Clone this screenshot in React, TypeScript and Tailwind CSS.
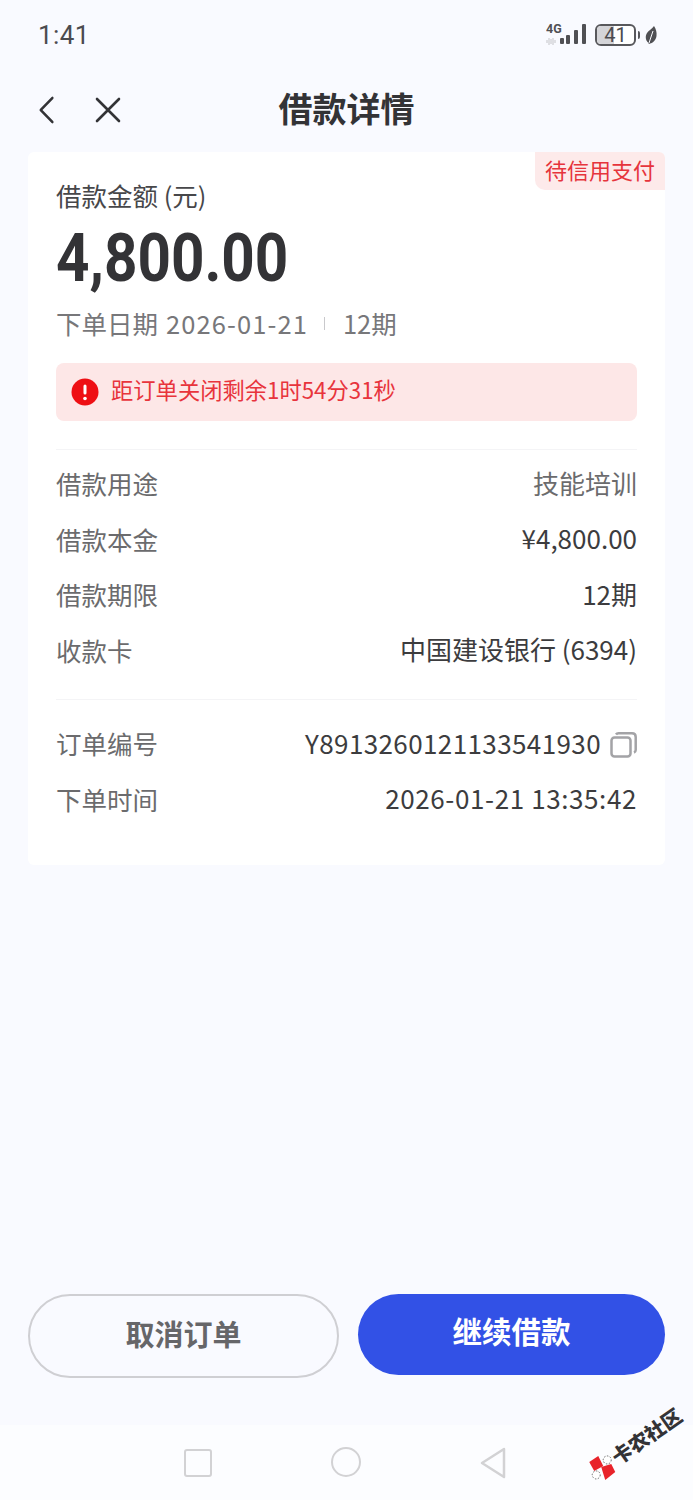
import React from "react";

const CJK = "font-['Noto_Sans_CJK_SC','Noto_Sans',sans-serif]";

function Row({ label, children }: { label: string; children: React.ReactNode }) {
  return (
    <div className="flex h-[55.500px] items-center justify-between pb-[6px]">
      <span className="text-[25.500px] leading-none text-[#6b6b6d]">{label}</span>
      <span className="flex items-center text-[26px] leading-none text-[#3c3c3e]">{children}</span>
    </div>
  );
}

export default function App() {
  return (
    <div className={`${CJK} relative flex h-[1500px] w-[693px] flex-col overflow-hidden bg-[#f9faff]`}>
      {/* status bar */}
      <div className="flex h-[70px] shrink-0 items-center justify-between pl-[38px] pr-[36px]">
        <span className="font-['Roboto',sans-serif] text-[26px] leading-none tracking-[0.4px] text-[#4b4b4f]">1:41</span>
        <div className="flex items-center">
          <svg width="41" height="30" viewBox="0 -3 41 30">
            <text x="0" y="10" fontSize="12.500" fontWeight="700" fill="#505054" fontFamily="Roboto">4G</text>
            <path d="M1 17v3M3 15v7M5 16v5M7 15v7M9 17v3" stroke="#c4c4c8" strokeWidth="1" />
            <rect x="14" y="15" width="4" height="6" rx="1" fill="#505054" />
            <rect x="20" y="12" width="4" height="9" rx="1" fill="#505054" />
            <rect x="28" y="7" width="4" height="14" rx="1" fill="#505054" />
            <rect x="36" y="1" width="4" height="20" rx="1" fill="#505054" />
          </svg>
          <div className="relative ml-[8px] flex h-[22px] w-[41px] items-center justify-center overflow-hidden rounded-[6px] border-2 border-[#58585c] bg-white">
            <div className="absolute inset-y-0 left-0 w-[17px] bg-[#d4d4d8]" />
            <span className="relative font-['Roboto',sans-serif] text-[20px] leading-none text-[#4b4b4f]">41</span>
          </div>
          <div className="ml-[2px] h-[8px] w-[2px] rounded-r bg-[#58585c]" />
          <svg className="ml-[5px]" width="12" height="18" viewBox="0 0 12 18">
            <path d="M9 0C11 3 12 6 11.500 10C11 14 8 17 5 17.500L4 18L3 16.500C0.500 14 0 10 2 7C3.500 4.500 7 3 9 0Z" fill="#505054" />
            <path d="M8 5L4 17" stroke="#f9faff" strokeWidth="1" />
          </svg>
        </div>
      </div>

      {/* header */}
      <div className="relative flex h-[80px] shrink-0 items-center justify-center pb-[4px]">
        <div className="absolute left-[38px] top-[25px] flex items-center gap-[37px]">
          <svg width="20" height="30" viewBox="0 0 20 30" fill="none">
            <path d="M16 3L3 15L16 27" stroke="#333336" strokeWidth="2.600" strokeLinecap="round" strokeLinejoin="round" transform="scale(0.9 1)" />
          </svg>
          <svg width="26" height="26" viewBox="0 0 26 26" fill="none">
            <path d="M2 2L24 24M24 2L2 24" stroke="#333336" strokeWidth="2.600" strokeLinecap="round" />
          </svg>
        </div>
        <span className="text-[34px] font-bold leading-none text-[#333336]">借款详情</span>
      </div>

      {/* card */}
      <div className="relative mx-[28px] mt-[2px] h-[713px] shrink-0 rounded-[6px] bg-white px-[28px] pt-[27px]">
        <div className="absolute right-0 top-0 flex h-[38px] w-[130px] items-center justify-center rounded-bl-[10px] rounded-tr-[6px] bg-[#fdeaea] pb-[4px] text-[22px] leading-none text-[#e6343c]">
          待信用支付
        </div>
        <div className="text-[25.500px] leading-[32px] text-[#47474a]">借款金额 (元)</div>
        <div className="mt-[14px] origin-left scale-x-[0.885] font-['Roboto',sans-serif] text-[66px] font-bold leading-[68px] text-[#333336]">4,800.00</div>
        <div className="mt-[14px] flex h-[32px] items-center text-[25.500px] leading-none text-[#77777a]">
          <span>下单日期</span>
          <span className="ml-[8px] tracking-[1.100px]">2026-01-21</span>
          <span className="ml-[16px] h-[13px] w-px bg-[#c9c9cc]" />
          <span className="ml-[18px]">12期</span>
        </div>
        <div className="mt-[24px] flex h-[58px] items-center rounded-[8px] bg-[#fde7e7] pl-[15px]">
          <svg width="28" height="28" viewBox="0 0 28 28">
            <circle cx="14" cy="14" r="13.500" fill="#ee0f14" />
            <rect x="12.500" y="6.500" width="3" height="10" rx="1.500" fill="#fff" />
            <circle cx="14" cy="20.500" r="1.800" fill="#fff" />
          </svg>
          <span className="mb-[5px] ml-[12px] text-[22.300px] leading-none text-[#e8343c]">距订单关闭剩余1时54分31秒</span>
        </div>

        <div className="mt-[28px] h-px bg-[#f4f4f6]" />
        <div className="mt-[8px]">
          <Row label="借款用途"><span className="text-[#6b6b6d]">技能培训</span></Row>
          <Row label="借款本金">¥4,800.00</Row>
          <Row label="借款期限">12期</Row>
          <Row label="收款卡">中国建设银行 (6394)</Row>
        </div>

        <div className="mt-[19px] h-px bg-[#f4f4f6]" />
        <div className="mt-[18px]">
          <Row label="订单编号">
            <span className="tracking-[0.4px]">Y8913260121133541930</span>
            <svg className="ml-[9px] mt-[4px]" width="27" height="26" viewBox="0 0 27 26" fill="none" stroke="#a3a3a6" strokeWidth="2.500">
              <rect x="1.500" y="5.500" width="19" height="19" rx="3" />
              <path d="M6 2.500C6.500 1.700 7.500 1.300 8.500 1.300H22C24.500 1.300 25.700 2.500 25.700 5V18C25.700 19 25.200 20 24 20.500" />
            </svg>
          </Row>
          <Row label="下单时间"><span className="tracking-[0.6px]">2026-01-21 13:35:42</span></Row>
        </div>
      </div>

      <div className="flex-1" />

      {/* actions */}
      <div className="flex shrink-0 items-start justify-between pl-[28px] pr-[28px]">
        <button className="flex h-[84px] w-[311px] items-center justify-center rounded-full border-2 border-[#cfcfd3] pb-[6px] text-[29px] font-bold leading-none text-[#666669]">
          取消订单
        </button>
        <button className="flex h-[81px] w-[307px] items-center justify-center rounded-full bg-[#3251e6] pb-[8px] text-[29.500px] font-bold leading-none text-white">
          继续借款
        </button>
      </div>

      {/* nav bar */}
      <div className="mt-[47px] flex h-[75px] shrink-0 items-start bg-[#fcfdff] pl-[184px] pt-[22px]">
        <div className="mt-[2px] h-[28px] w-[28px] rounded-[3px] border-[2.500px] border-[#d2d2d4]" />
        <div className="ml-[119px] h-[30px] w-[30px] rounded-full border-[2.500px] border-[#d2d2d4]" />
        <svg className="ml-[118px]" width="30" height="32" viewBox="0 0 30 32" fill="none">
          <path d="M25 2L3 16L25 30Z" stroke="#d2d2d4" strokeWidth="2.500" strokeLinejoin="round" />
        </svg>
      </div>

      {/* watermark */}
      <div className="absolute left-[585px] top-[1401px] flex h-[86px] w-[100px] items-center justify-center">
        <div className="flex shrink-0 -rotate-[35deg] items-center">
          <svg width="28" height="28" viewBox="0 0 28 28" className="shrink-0">
            <g transform="rotate(35 14 14)">
              <path d="M1 9L10 3L15 13L6 18Z" fill="#e8232a" />
              <path d="M13 14L23 11L27 19L17 27Z" fill="#e8232a" />
              <circle cx="19" cy="7" r="4" fill="#fff" stroke="#666" strokeWidth="1" strokeDasharray="1.500 1.500" />
              <circle cx="8" cy="22" r="4" fill="#fff" stroke="#666" strokeWidth="1" strokeDasharray="1.500 1.500" />
            </g>
          </svg>
          <span className="whitespace-nowrap text-[20px] font-black leading-none text-[#333336]">卡农社区</span>
        </div>
      </div>
    </div>
  );
}
